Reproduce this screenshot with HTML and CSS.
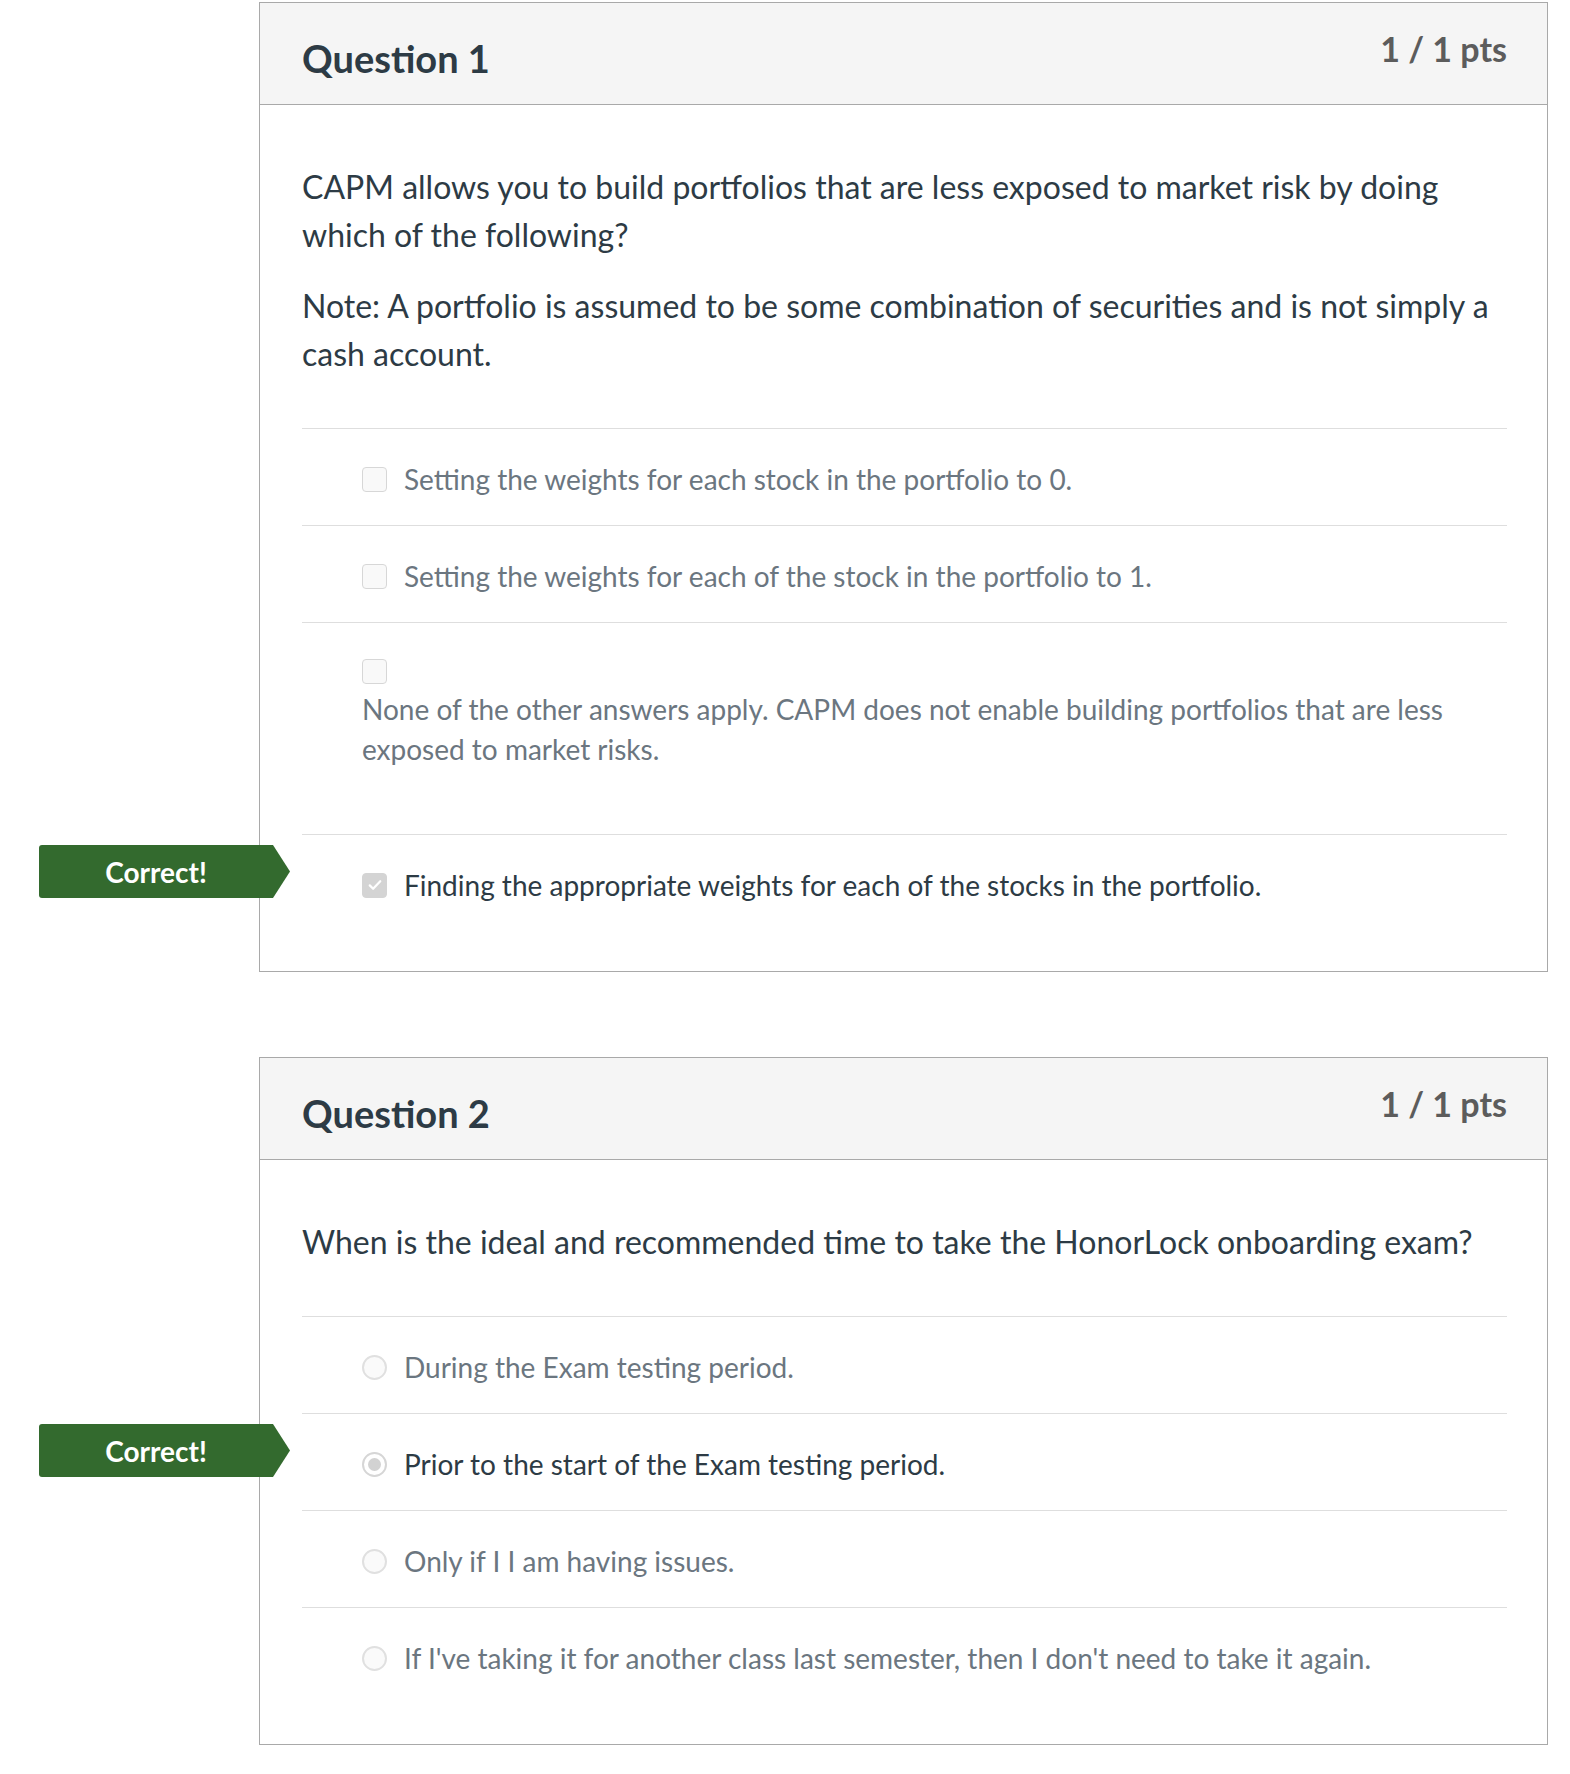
FILE: index.html
```html
<!DOCTYPE html>
<html lang="en">
<head>
<meta charset="utf-8">
<title>Quiz results</title>
<link rel="stylesheet" href="styles.css">
</head>
<body>
<div class="page">
  <section class="question">
    <header class="q-header">
      <h2 class="q-title">Question 1</h2>
      <div class="q-points">1 / 1 pts</div>
    </header>
    <div class="q-body">
      <div class="q-text">
        <p>CAPM allows you to build portfolios that are less exposed to market risk by doing which of the following?</p>
        <p>Note: A portfolio is assumed to be some combination of securities and is not simply a cash account.</p>
      </div>
      <ul class="answers">
        <li class="answer">
          <span class="box"></span>
          <span class="a-text">Setting the weights for each stock in the portfolio to 0.</span>
        </li>
        <li class="answer">
          <span class="box"></span>
          <span class="a-text">Setting the weights for each of the stock in the portfolio to 1.</span>
        </li>
        <li class="answer answer-stacked">
          <span class="box"></span>
          <span class="a-text">None of the other answers apply. CAPM does not enable building portfolios that are less exposed to market risks.</span>
        </li>
        <li class="answer answer-selected">
          <span class="badge">Correct!</span>
          <span class="box box-checked">
            <svg viewBox="0 0 24 24" width="18" height="18"><path d="M5 12.5l4.5 4.5L19 7" fill="none" stroke="#fff" stroke-width="3" stroke-linecap="round" stroke-linejoin="round"/></svg>
          </span>
          <span class="a-text">Finding the appropriate weights for each of the stocks in the portfolio.</span>
        </li>
      </ul>
    </div>
  </section>

  <section class="question">
    <header class="q-header">
      <h2 class="q-title">Question 2</h2>
      <div class="q-points">1 / 1 pts</div>
    </header>
    <div class="q-body">
      <div class="q-text">
        <p>When is the ideal and recommended time to take the HonorLock onboarding exam?</p>
      </div>
      <ul class="answers">
        <li class="answer">
          <span class="radio"></span>
          <span class="a-text">During the Exam testing period.</span>
        </li>
        <li class="answer answer-selected">
          <span class="badge">Correct!</span>
          <span class="radio radio-checked"></span>
          <span class="a-text">Prior to the start of the Exam testing period.</span>
        </li>
        <li class="answer">
          <span class="radio"></span>
          <span class="a-text">Only if I I am having issues.</span>
        </li>
        <li class="answer">
          <span class="radio"></span>
          <span class="a-text">If I've taking it for another class last semester, then I don't need to take it again.</span>
        </li>
      </ul>
    </div>
  </section>
</div>
</body>
</html>
```

FILE: styles.css
```css
* { box-sizing: border-box; }

html, body {
  margin: 0;
  padding: 0;
  background: #ffffff;
}

body {
  font-family: Lato, "Open Sans", "Liberation Sans", sans-serif;
  color: #2d3b45;
}

.page {
  padding: 2px 0 0 259px;
  width: 1548px;
}

.question {
  border: 1px solid #a9a9a9;
  background: #fff;
  margin-bottom: 85px;
}

.q-header {
  display: flex;
  justify-content: space-between;
  align-items: flex-start;
  height: 102px;
  padding: 0 40px 0 42px;
  background: #f5f5f5;
  border-bottom: 1px solid #a9a9a9;
}

.q-title {
  margin: 32px 0 0;
  font-size: 38px;
  line-height: 46px;
  font-weight: 700;
  color: #2d3b45;
}

.q-points {
  margin-top: 26px;
  font-size: 34px;
  line-height: 40px;
  font-weight: 700;
  color: #5c5c5c;
}

.q-body {
  padding: 58px 40px 40px 42px;
}

.q-text p {
  margin: 0 0 23px;
  font-size: 32px;
  line-height: 48px;
}

.q-text p:last-child {
  margin-bottom: 50px;
}

.answers {
  list-style: none;
  margin: 0;
  padding: 0;
}

.answer {
  position: relative;
  display: flex;
  align-items: center;
  gap: 17px;
  min-height: 97px;
  padding: 30px 0 26px 60px;
  border-top: 1px solid #dedede;
  font-size: 28px;
  line-height: 40px;
  color: #6b7680;
}

.answer-selected {
  color: #2d3b45;
}

.answer-stacked {
  flex-direction: column;
  align-items: flex-start;
  gap: 5px;
  padding-top: 36px;
  padding-bottom: 65px;
}

.box {
  flex: none;
  width: 25px;
  height: 25px;
  border: 1px solid #d7d7d7;
  border-radius: 4px;
  background: #f9f9f9;
  display: flex;
  align-items: center;
  justify-content: center;
}

.box-checked {
  background: #d4d4d4;
  border-color: #d4d4d4;
}

.radio {
  flex: none;
  width: 25px;
  height: 25px;
  border: 2px solid #e0e0e0;
  border-radius: 50%;
  background: #fafafa;
  display: flex;
  align-items: center;
  justify-content: center;
}

.radio-checked {
  border-color: #d6d6d6;
  background: #fff;
}

.radio-checked::after {
  content: "";
  width: 13px;
  height: 13px;
  border-radius: 50%;
  background: #d2d2d2;
}

.badge {
  position: absolute;
  left: -263px;
  top: 10px;
  width: 251px;
  height: 53px;
  padding-right: 17px;
  display: flex;
  align-items: center;
  justify-content: center;
  background: #336a2e;
  color: #fff;
  font-size: 28px;
  font-weight: 700;
  line-height: 1;
  border-radius: 3px 0 0 3px;
  clip-path: polygon(0 0, calc(100% - 17px) 0, 100% 50%, calc(100% - 17px) 100%, 0 100%);
}
```
